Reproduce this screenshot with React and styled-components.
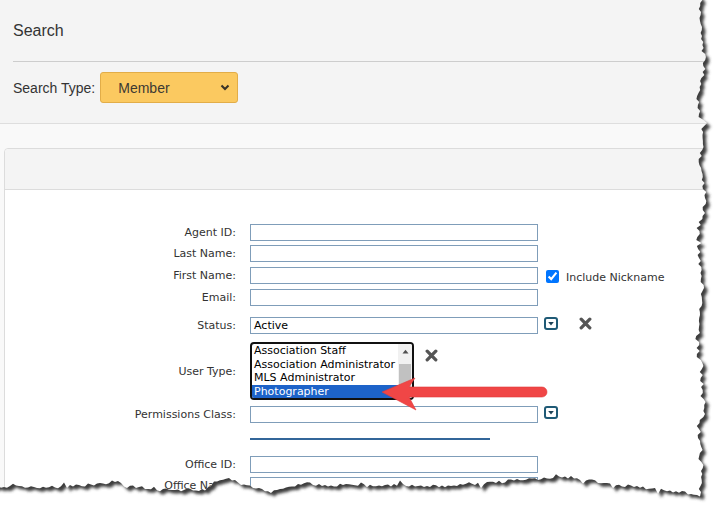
import React from 'react';
import styled, { createGlobalStyle } from 'styled-components';

const GlobalStyle = createGlobalStyle`
  html, body { margin: 0; padding: 0; background: #fff; }
  body { font-family: "Liberation Sans", Arial, sans-serif; }
  * { box-sizing: border-box; }
`;

const Page = styled.div`
  position: relative;
  width: 719px;
  height: 506px;
  overflow: hidden;
  background: #f9f9f9;
`;

const TopArea = styled.div`
  background: #f4f4f4;
`;

const TitleBar = styled.div`
  margin-left: 13px;
  height: 62px;
  display: flex;
  align-items: center;
  padding-top: 1px;
  border-bottom: 1px solid #cdcdcd;
  font-size: 16px;
  color: #333;
`;

const SearchTypeRow = styled.div`
  display: flex;
  align-items: center;
  gap: 5px;
  padding: 10px 0 20px 13px;
  border-bottom: 1px solid #dedede;
  font-size: 14px;
  color: #333;
`;

const YellowSelect = styled.div`
  width: 138px;
  height: 31px;
  display: flex;
  align-items: center;
  justify-content: space-between;
  padding: 0 7px 0 17px;
  background: #fbc960;
  border: 1px solid #e2ad48;
  border-radius: 3px;
  font-size: 14px;
  color: #3d3a33;
`;

const Panel = styled.div`
  margin: 24px -60px 0 4px;
  background: #fff;
  border: 1px solid #dcdcdc;
  border-radius: 4px 0 0 0;
`;

const PanelHeader = styled.div`
  height: 41px;
  background: #f4f4f4;
  border-bottom: 1px solid #dcdcdc;
  border-radius: 4px 0 0 0;
`;

const PanelBody = styled.div`
  display: flex;
  flex-direction: column;
  padding-top: 34px;
  padding-bottom: 40px;
  font-family: "DejaVu Sans", Verdana, sans-serif;
  font-size: 11px;
`;

const Row = styled.div`
  display: grid;
  grid-template-columns: 245px 288px auto;
  align-items: center;
  margin-top: ${p => p.$mt || 0}px;
`;

const Label = styled.div`
  text-align: right;
  padding-right: 14px;
  color: #333;
  white-space: nowrap;
`;

const TextInput = styled.div`
  height: 17px;
  border: 1px solid #7f9db9;
  padding: 0 3px;
  display: flex;
  align-items: center;
  color: #000;
  font-size: 11px;
  background: #fff;
`;

const Extras = styled.div`
  display: flex;
  align-items: center;
  align-self: ${p => p.$self || 'center'};
  padding-left: 6px;
  gap: ${p => p.$gap || 0}px;
  color: #333;
`;

const Check = styled.input`
  width: 13px;
  height: 13px;
  margin: 2px 7px 0 2px;
`;

const CheckText = styled.span`
  padding-top: 3px;
`;

const ListCell = styled.div`
  display: flex;
  align-items: flex-start;
  gap: 11px;
`;

const ListBox = styled.div`
  width: 164px;
  height: 58px;
  border: 2px solid #111;
  border-radius: 4px;
  display: flex;
  overflow: hidden;
  background: #fff;
`;

const Options = styled.div`
  flex: 1;
  display: flex;
  flex-direction: column;
`;

const Option = styled.div`
  height: 13.5px;
  line-height: 13.5px;
  padding-left: 2px;
  white-space: nowrap;
  color: ${p => (p.$selected ? '#fff' : '#000')};
  background: ${p => (p.$selected ? '#1d63c9' : 'transparent')};
`;

const ScrollTrack = styled.div`
  width: 14px;
  background: #f1f1f1;
  display: flex;
  flex-direction: column;
`;

const ScrollBtn = styled.div`
  height: 15px;
  display: flex;
  align-items: center;
  justify-content: center;
`;

const ScrollThumb = styled.div`
  margin: 5px 1px 0 1px;
  flex: 1;
  background: #c1c1c1;
`;

const XWrap = styled.div`
  margin-top: 7px;
  display: flex;
`;

const Divider = styled.div`
  grid-column: 2;
  width: 240px;
  height: 2px;
  background: #336699;
`;

const Overlay = styled.svg`
  position: absolute;
  left: ${p => p.$x}px;
  top: ${p => p.$y}px;
  pointer-events: none;
`;

const Chevron = () => (
  <svg width="10" height="7" viewBox="0 0 10 7">
    <path d="M1.5 1.5 L5 5 L8.5 1.5" stroke="#3a3428" strokeWidth="2.1" fill="none" />
  </svg>
);

const DropIcon = () => (
  <svg width="14" height="13" viewBox="0 0 14 13">
    <rect x="1" y="1" width="12" height="11" rx="2" fill="#fff" stroke="#1f5a76" strokeWidth="2" />
    <path d="M4.2 5 L9.8 5 L7 8.6 Z" fill="#1d4257" />
  </svg>
);

const XIcon = () => (
  <svg width="13" height="13" viewBox="0 0 13 13">
    <path d="M2.2 2.2 L10.8 10.8 M10.8 2.2 L2.2 10.8" stroke="#555" strokeWidth="3.3" strokeLinecap="round" />
  </svg>
);

const UpArrow = () => (
  <svg width="7" height="5" viewBox="0 0 7 5">
    <path d="M0.5 4.5 L3.5 0.8 L6.5 4.5 Z" fill="#505050" />
  </svg>
);

function makeRng(seed) {
  let s = seed;
  return () => {
    s = (s * 16807) % 2147483647;
    return s / 2147483647;
  };
}

function interp(profile, t) {
  for (let i = 0; i < profile.length - 1; i++) {
    const [t0, v0] = profile[i];
    const [t1, v1] = profile[i + 1];
    if (t >= t0 && t <= t1) return v0 + ((v1 - v0) * (t - t0)) / (t1 - t0);
  }
  return profile[profile.length - 1][1];
}

function buildPaperPath() {
  const r = makeRng(4242);
  const right = [[-30, 701], [30, 700], [60, 705], [100, 698], [125, 703], [170, 700], [200, 706], [240, 698], [300, 703], [340, 697], [400, 704], [440, 699], [500, 703]];
  const bottom = [
    [-30, 487], [60, 487], [100, 484], [115, 481], [130, 486], [160, 490], [205, 490],
    [215, 481], [228, 478], [240, 484], [262, 490], [285, 489], [300, 482], [320, 485],
    [380, 485], [450, 486], [520, 480], [570, 477], [620, 485], [680, 492], [710, 497],
  ];
  const pts = [[-30, -30]];
  for (let y = -30; y <= 493; y += 3) {
    const base = interp(right, y);
    const j = (r() - 0.5) * 4 + (r() < 0.14 ? (r() - 0.5) * 10 : 0);
    pts.push([base + j, y]);
  }
  for (let x = 700; x >= -30; x -= 3) {
    const base = interp(bottom, x);
    const j = (r() - 0.5) * 3 + (r() < 0.14 ? (r() - 0.5) * 7 : 0);
    pts.push([x, base + j]);
  }
  return 'M' + pts.map(p => p[0].toFixed(1) + ' ' + p[1].toFixed(1)).join(' L') + ' Z';
}

const PAPER = buildPaperPath();

const TornEdge = () => (
  <Overlay $x={0} $y={0} width="719" height="506" viewBox="0 0 719 506">
    <defs>
      <filter id="tornBlur" filterUnits="userSpaceOnUse" x="-40" y="-40" width="800" height="600">
        <feGaussianBlur stdDeviation="1.8" />
      </filter>
      <mask id="outsideMask" maskUnits="userSpaceOnUse" x="0" y="0" width="719" height="506">
        <rect x="0" y="0" width="719" height="506" fill="#fff" />
        <path d={PAPER} fill="#000" />
      </mask>
    </defs>
    <path d={'M-40 -40 H770 V560 H-40 Z ' + PAPER} fill="#fff" fillRule="evenodd" />
    <g mask="url(#outsideMask)">
      <path d={PAPER} transform="translate(3.5 3.5)" fill="#3c3c3c" filter="url(#tornBlur)" />
    </g>
  </Overlay>
);

const RedArrow = () => (
  <Overlay $x={378} $y={374} width="175" height="40" viewBox="0 0 175 40">
    <path
      d="M4 18 L37 4 L31 13 L164 13 A5 5 0 0 1 164 23 L31 23 L38 36 Z"
      fill="#f04646"
      stroke="#e03a3a"
      strokeWidth="0.6"
      strokeLinejoin="round"
    />
  </Overlay>
);

const Field = ({ label, value, mt, children }) => (
  <Row $mt={mt}>
    <Label>{label}</Label>
    <TextInput>{value}</TextInput>
    {children}
  </Row>
);

const userTypes = ['Association Staff', 'Association Administrator', 'MLS Administrator', 'Photographer'];

export default function App() {
  return (
    <>
      <GlobalStyle />
      <Page>
        <TopArea>
          <TitleBar>Search</TitleBar>
          <SearchTypeRow>
            <span>Search Type:</span>
            <YellowSelect>
              <span>Member</span>
              <Chevron />
            </YellowSelect>
          </SearchTypeRow>
        </TopArea>
        <Panel>
          <PanelHeader />
          <PanelBody>
            <Field label="Agent ID:" />
            <Field label="Last Name:" mt={4} />
            <Field label="First Name:" mt={5}>
              <Extras>
                <Check type="checkbox" defaultChecked />
                <CheckText>Include Nickname</CheckText>
              </Extras>
            </Field>
            <Field label="Email:" mt={5} />
            <Field label="Status:" value="Active" mt={11}>
              <Extras $self="start" $gap={21}>
                <DropIcon />
                <XIcon />
              </Extras>
            </Field>
            <Row $mt={8}>
              <Label>User Type:</Label>
              <ListCell>
                <ListBox>
                  <Options>
                    {userTypes.map(t => (
                      <Option key={t} $selected={t === 'Photographer'}>{t}</Option>
                    ))}
                  </Options>
                  <ScrollTrack>
                    <ScrollBtn><UpArrow /></ScrollBtn>
                    <ScrollThumb />
                  </ScrollTrack>
                </ListBox>
                <XWrap><XIcon /></XWrap>
              </ListCell>
            </Row>
            <Field label="Permissions Class:" mt={6}>
              <Extras $self="start">
                <DropIcon />
              </Extras>
            </Field>
            <Row $mt={15}>
              <Divider />
            </Row>
            <Field label="Office ID:" mt={16} />
            <Field label="Office Name:" mt={4} />
          </PanelBody>
        </Panel>
        <RedArrow />
        <TornEdge />
      </Page>
    </>
  );
}
